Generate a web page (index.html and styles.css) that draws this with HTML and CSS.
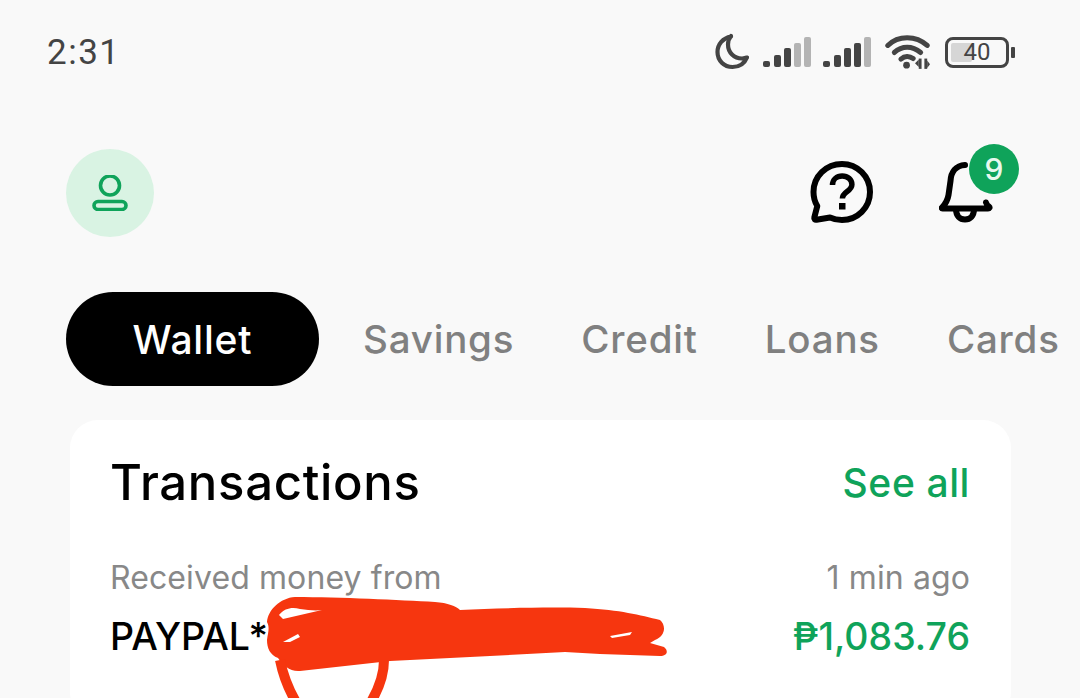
FILE: index.html
```html
<!DOCTYPE html>
<html lang="en">
<head>
<meta charset="utf-8">
<title>Wallet</title>
<link rel="stylesheet" href="styles.css">
</head>
<body>
<div class="screen">
  <header class="status">
    <span class="time">2:31</span>
    <div class="status-icons">
      <svg class="moon" width="38" height="38" viewBox="0 0 38 38"><path d="M17 3.500C9 5 3.500 11 3.500 19c0 8.500 6.500 15 15 15 6.500 0 12-3.500 14.500-9.500-1.500 .7-3.500 1-5 1-8 0-14-6-14-14 0-3 1-6 3-8.500z" fill="none" stroke="#444" stroke-width="4.200" stroke-linejoin="round"/></svg>
      <svg class="signal" width="48" height="32" viewBox="0 0 48 32"><g fill="#444"><rect x="0" y="25" width="7" height="6" rx="2"/><rect x="11" y="19" width="7" height="12" rx="2"/><rect x="21" y="12" width="7" height="19" rx="2"/></g><g fill="#b4b4b4"><rect x="31" y="7" width="7" height="24" rx="2"/><rect x="41" y="1" width="7" height="30" rx="2"/></g></svg>
      <svg class="signal" width="48" height="32" viewBox="0 0 48 32"><g fill="#444"><rect x="0" y="25" width="7" height="6" rx="2"/><rect x="11" y="19" width="7" height="12" rx="2"/><rect x="21" y="12" width="7" height="19" rx="2"/><rect x="31" y="7" width="7" height="24" rx="2"/></g><rect x="41" y="1" width="7" height="30" rx="2" fill="#b4b4b4"/></svg>
      <svg class="wifi" width="45" height="36" viewBox="0 0 48 36"><g fill="none" stroke="#444" stroke-width="5.400" stroke-linecap="round"><path d="M3 11C14 0 33 0 45 11"/><path d="M10 18.500C18 11 29 11 38 18.500"/><path d="M17 25.500C21 22 26 22 30 25"/></g><circle cx="23" cy="32" r="3.600" fill="#444"/><g fill="#444"><rect x="36" y="25" width="3" height="11"/><rect x="42" y="25" width="3" height="11"/><path d="M32 30l4-4v8zM48 31l-3-4v8z"/></g></svg>
      <div class="battery">
        <div class="battery-body"><span class="battery-fill"></span><span class="battery-num">40</span></div>
        <span class="battery-cap"></span>
      </div>
    </div>
  </header>

  <div class="topbar">
    <div class="avatar">
      <svg width="36" height="36" viewBox="0 0 36 36"><g fill="none" stroke="#0fa35a" stroke-width="3.600"><circle cx="18" cy="10.500" r="9.500"/><rect x="2" y="26.500" width="32" height="8" rx="4"/></g></svg>
    </div>
    <div class="top-actions">
      <svg class="help" width="64" height="64" viewBox="0 0 64 64"><path d="M32 3C16 3 3.500 15.500 3.500 31c0 5 1.300 10 3.800 14l-3 11.500c-.4 1.500 .7 2.500 2.200 2.200L20 56.500c3.700 1.700 8 2.500 12 2.500 15.500 0 28-12.500 28-28S47.500 3 32 3z" fill="none" stroke="#000" stroke-width="6" stroke-linejoin="round"/><path d="M22.500 24c0-5.500 4.300-9 9.700-9 5.500 0 9.700 3.500 9.700 8.500 0 7-9.500 7-9.500 14" fill="none" stroke="#000" stroke-width="5.500"/><rect x="29" y="42" width="6.500" height="6.500" fill="#000"/></svg>
      <div class="bell-wrap">
        <svg class="bell" width="54" height="64" viewBox="0 0 54 64"><g fill="none" stroke="#000" stroke-width="6" stroke-linecap="round" stroke-linejoin="round"><path d="M26 4C17 4.500 12 11 11.500 20L9.500 34c-.8 5-3 9-6.500 12.500-.5 .5-.3 1 .5 1H49c1.500 0 2-1 1-1.800-1.500-1.200-2.500-2.500-3-4.200"/><path d="M17 48c0 7 4 10.500 9 10.500s9-3.500 9-10.500"/></g></svg>
        <span class="badge">9</span>
      </div>
    </div>
  </div>

  <nav class="tabs">
    <span class="tab tab-active">Wallet</span>
    <span class="tab">Savings</span>
    <span class="tab">Credit</span>
    <span class="tab">Loans</span>
    <span class="tab">Cards</span>
  </nav>

  <section class="card">
    <div class="card-head">
      <h2 class="card-title">Transactions</h2>
      <span class="see-all">See all</span>
    </div>
    <div class="txn-row txn-meta">
      <span>Received money from</span>
      <span>1 min ago</span>
    </div>
    <div class="txn-row txn-main">
      <span class="txn-name">PAYPAL*</span>
      <span class="txn-amount">₱1,083.76</span>
    </div>
  </section>

  <svg class="scribble" width="1080" height="698" viewBox="0 0 1080 698">
    <path d="M267 622C268 610 280 598 295 597C340 597 400 600 435 602C448 603 456 606 460 610C500 608 550 607 585 608C620 610 640 615 660 620C666 625 666 636 655 640L650 643L664 647C669 651 667 656 660 656L600 654L565 652L470 657L390 661L300 671C290 672 283 665 278 658C270 655 267 648 267 640C268 632 270 628 267 622Z" fill="#f6360f"/>
    <path d="M280 660C283 675 289 690 296 702M384 660C384 675 378 690 371 702" fill="none" stroke="#f6360f" stroke-width="10"/>
    <path d="M279 615C285 608 292 607 300 609C308 610 315 611 322 610L283 619Z" fill="#fff"/>
    <path d="M283 642L298 634L300 637L290 642Z" fill="#fff"/>
    <path d="M610 636L632 632L630 635L612 638Z" fill="#fff"/>
  </svg>
</div>
</body>
</html>
```
FILE: styles.css
```css
* { box-sizing: border-box; }
html, body { margin: 0; padding: 0; }
body { background: #f9f9f9; font-family: "Inter", "Liberation Sans", sans-serif; overflow: hidden; }
.screen { position: relative; width: 1080px; height: 698px; overflow: hidden; }

.status { display: flex; justify-content: space-between; align-items: center; height: 38px; margin-top: 33px; padding: 0 65px 0 47px; }
.time { font-family: "Roboto", sans-serif; font-size: 35px; color: #444; letter-spacing: 1.500px; }
.status-icons { display: flex; align-items: center; gap: 12px; }
.moon { margin-right: -1px; }
.wifi { margin-left: 2px; }
.battery { display: flex; align-items: center; gap: 2px; margin-left: 3px; }
.battery-body { position: relative; width: 64px; height: 31px; border: 3px solid #444; border-radius: 8px; display: flex; align-items: center; justify-content: center; }
.battery-fill { position: absolute; left: 3px; top: 3px; bottom: 3px; width: 21px; background: #d6d6d6; border-radius: 2px; }
.battery-num { position: relative; font-family: "Roboto", sans-serif; font-size: 24px; color: #444; }
.battery-cap { width: 4px; height: 11px; background: #444; border-radius: 1px; }

.topbar { display: flex; justify-content: space-between; align-items: center; margin-top: 78px; padding: 0 87px 0 66px; height: 88px; }
.avatar { width: 88px; height: 88px; border-radius: 50%; background: #d9f3e3; display: flex; align-items: center; justify-content: center; }
.top-actions { display: flex; align-items: center; gap: 65px; }
.bell-wrap { position: relative; width: 54px; height: 64px; }
.bell { display: block; }
.badge { position: absolute; right: -26px; top: -17px; width: 50px; height: 50px; border-radius: 50%; background: #0fa35a; color: #e8f8ee; font-size: 30px; font-weight: 500; display: flex; align-items: center; justify-content: center; }

.tabs { display: flex; align-items: center; margin-top: 55px; padding-left: 66px; height: 94px; white-space: nowrap; }
.tab { flex: none; font-size: 38.500px; font-weight: 500; letter-spacing: .8px; color: #808080; margin-right: 67px; }
.tab-active { width: 253px; height: 94px; border-radius: 47px; background: #000; color: #fff; font-size: 39px; display: flex; align-items: center; justify-content: center; margin-right: 44px; }

.card { margin: 34px 69px 0 70px; height: 300px; background: #fff; border-radius: 28px; padding: 32px 41px 32px 40px; }
.card-head { display: flex; justify-content: space-between; align-items: center; height: 60px; }
.card-title { margin: 0; font-size: 49px; font-weight: 500; letter-spacing: .7px; color: #000; }
.see-all { font-size: 39px; font-weight: 500; letter-spacing: .6px; color: #0fa35a; }
.txn-row { display: flex; justify-content: space-between; align-items: center; }
.txn-meta { margin-top: 45px; height: 40px; font-size: 32px; letter-spacing: .1px; color: #888; }
.txn-main { margin-top: 17px; height: 44px; font-size: 36px; font-weight: 500; }
.txn-name { color: #000; font-size: 37.500px; }
.txn-amount { color: #0fa35a; font-size: 37.500px; }

.scribble { position: absolute; left: 0; top: 0; pointer-events: none; }
```
